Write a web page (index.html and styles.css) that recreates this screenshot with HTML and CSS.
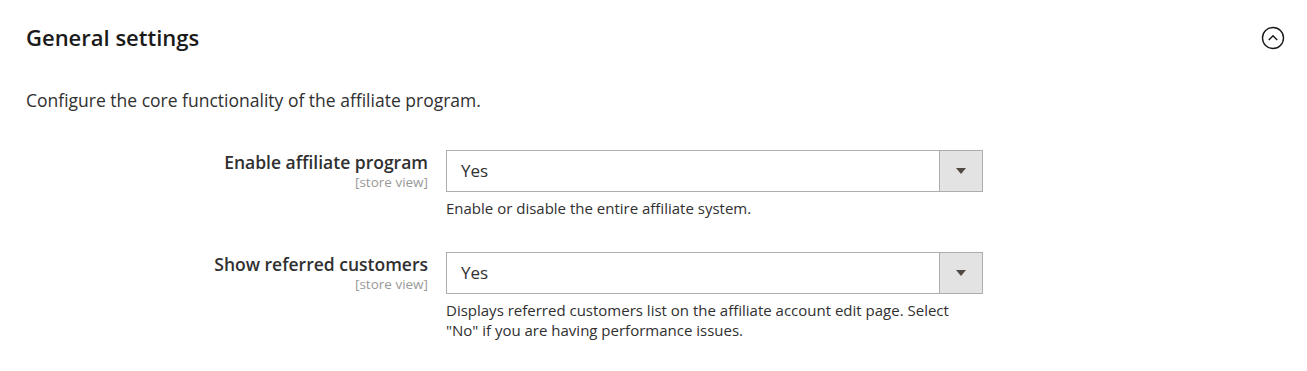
FILE: index.html
```html
<!DOCTYPE html>
<html lang="en">
<head>
<meta charset="utf-8">
<title>General settings</title>
<link rel="stylesheet" href="styles.css">
</head>
<body>
<section class="section">
  <header class="section-head">
    <h2 class="section-title">General settings</h2>
    <button class="collapse" type="button" aria-label="Collapse">
      <svg width="24" height="24" viewBox="0 0 24 24" aria-hidden="true">
        <circle cx="12" cy="12" r="10.5" fill="none" stroke="#1a1a1a" stroke-width="1.4"/>
        <path d="M7.8 14 L12 9.8 L16.2 14" fill="none" stroke="#1a1a1a" stroke-width="1.5"/>
      </svg>
    </button>
  </header>
  <p class="section-desc">Configure the core functionality of the affiliate program.</p>

  <div class="fields">
    <div class="field">
      <div class="label">
        <span class="label-text">Enable affiliate program</span>
        <span class="scope">[store view]</span>
      </div>
      <div class="control">
        <div class="select">
          <span class="select-value">Yes</span>
          <span class="select-arrow"><span class="tri"></span></span>
        </div>
        <p class="note">Enable or disable the entire affiliate system.</p>
      </div>
    </div>

    <div class="field">
      <div class="label">
        <span class="label-text">Show referred customers</span>
        <span class="scope">[store view]</span>
      </div>
      <div class="control">
        <div class="select">
          <span class="select-value">Yes</span>
          <span class="select-arrow"><span class="tri"></span></span>
        </div>
        <p class="note">Displays referred customers list on the affiliate account edit page. Select "No" if you are having performance issues.</p>
      </div>
    </div>
  </div>
</section>
</body>
</html>
```

FILE: styles.css
```css
html, body {
  margin: 0;
  padding: 0;
  background: #ffffff;
}

body {
  font-family: "Open Sans", "Liberation Sans", sans-serif;
  color: #303030;
}

.section {
  padding: 0 22px 0 26px;
}

.section-head {
  display: flex;
  align-items: center;
  justify-content: space-between;
  height: 76px;
}

.section-title {
  margin: 0 0 3px;
  font-size: 22px;
  font-weight: 600;
  color: #1a1a1a;
  line-height: 30px;
}

.collapse {
  border: 0;
  background: none;
  padding: 0;
  width: 24px;
  height: 24px;
  display: flex;
}

.section-desc {
  margin: 12px 0 0;
  font-size: 17.5px;
  line-height: 24px;
  color: #303030;
}

.fields {
  margin-top: 38px;
  display: flex;
  flex-direction: column;
  gap: 34px;
}

.field {
  display: grid;
  grid-template-columns: 402px 537px;
  column-gap: 18px;
}

.label {
  display: flex;
  flex-direction: column;
  align-items: flex-end;
  text-align: right;
}

.label-text {
  font-size: 17.5px;
  font-weight: 600;
  line-height: 24px;
  color: #303030;
}

.scope {
  font-size: 13.5px;
  line-height: 16px;
  color: #999999;
}

.select {
  height: 42px;
  box-sizing: border-box;
  border: 1px solid #adadad;
  display: flex;
  background: #ffffff;
}

.select-value {
  flex: 1;
  padding: 9px 14px 0;
  font-size: 17px;
  line-height: 22px;
  color: #303030;
}

.select-arrow {
  width: 42px;
  border-left: 1px solid #adadad;
  background: #e3e3e3;
  display: flex;
  align-items: center;
  justify-content: center;
}

.tri {
  width: 0;
  height: 0;
  border-left: 5px solid transparent;
  border-right: 5px solid transparent;
  border-top: 6px solid #514943;
}

.note {
  margin: 6px 0 0;
  font-size: 15px;
  line-height: 20px;
  color: #303030;
  padding-right: 20px;
}
```
